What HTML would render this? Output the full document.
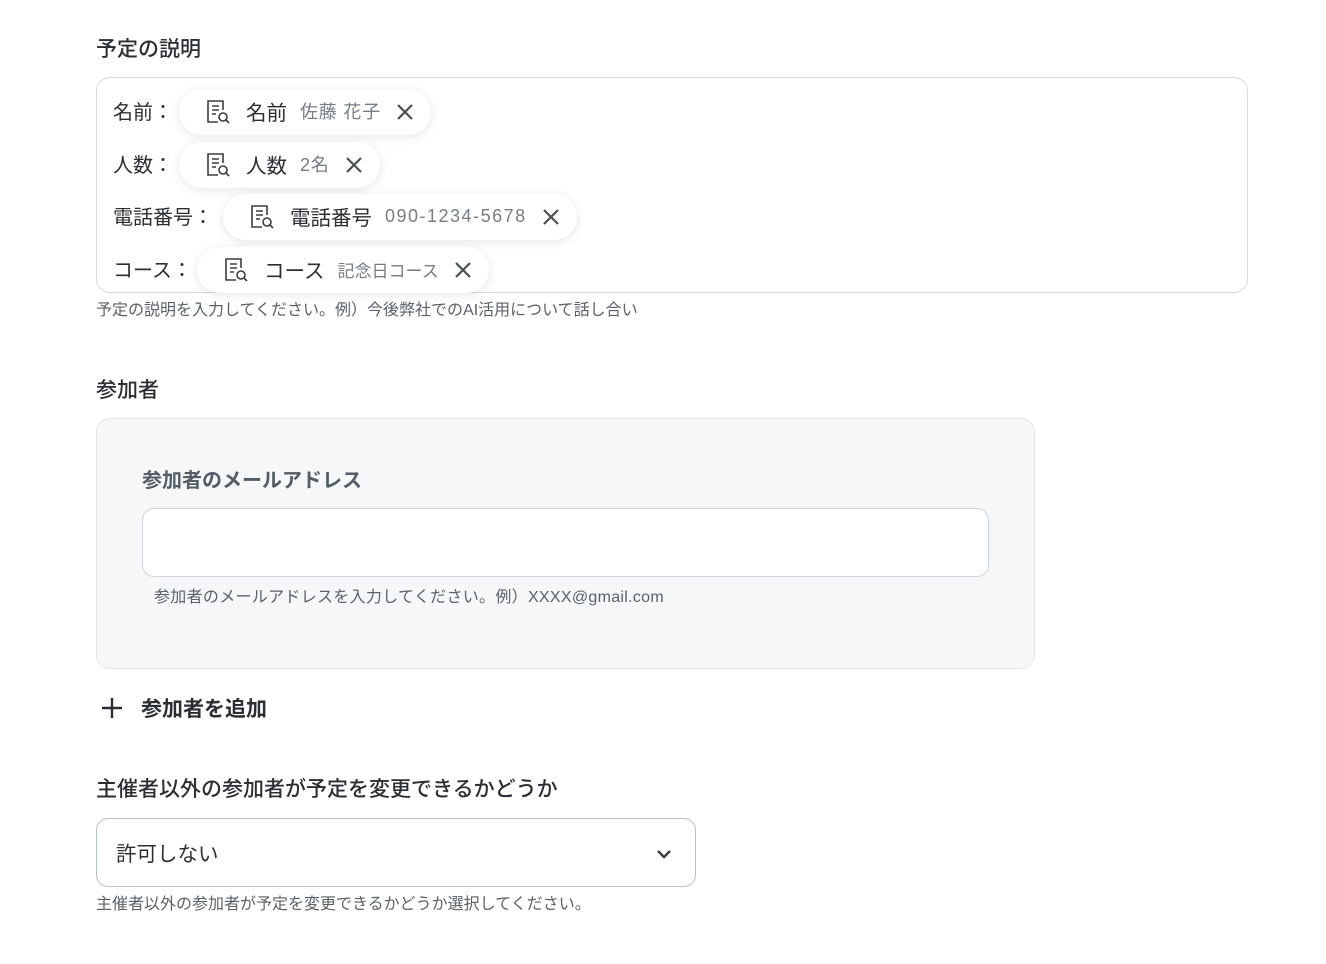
<!DOCTYPE html>
<html><head><meta charset="utf-8"><style>
*{margin:0;padding:0;box-sizing:border-box}
body{width:1326px;height:964px;background:#fff;position:relative;overflow:hidden;font-family:"Liberation Sans","Noto Sans CJK JP",sans-serif;color:#2b2f33}
.a{position:absolute;white-space:nowrap}
.t{font-size:21px;font-weight:500;color:#2b2f33}
.h{font-size:16px;color:#5b6168}
.box{position:absolute;left:96px;top:77px;width:1152px;height:216px;border:1px solid #d6dade;border-radius:14px;overflow:hidden}
.lbl{position:absolute;left:16px;font-size:20px;color:#2b2f33}
.chip{position:absolute;height:46px;border-radius:23px;background:#fff;box-shadow:0 2px 10px rgba(0,0,0,0.10);display:flex;align-items:center;padding-left:26px;padding-right:16px;white-space:nowrap}
.chip svg.ic{margin-right:15px}
.chip .n{font-size:20.5px;color:#2b2f33;margin-right:13px;position:relative;top:-1px}
.chip .v{font-size:18px;color:#777d84;margin-right:14px;letter-spacing:0.8px;position:relative;top:-1px}
</style></head><body>
<div class="a t" style="left:96px;top:33px">予定の説明</div>
<div class="box">
 <div class="lbl" style="top:18px">名前：</div>
 <div class="lbl" style="top:71px">人数：</div>
 <div class="lbl" style="top:123px">電話番号：</div>
 <div class="lbl" style="top:176px">コース：</div>
</div>
<div class="chip" style="left:179px;top:89px">
 <svg class="ic" width="26" height="26" viewBox="0 0 26 26" fill="none" stroke="#3a3e43" stroke-width="1.6"><path d="M13 23H3V2h15v9"/><path d="M7 7h7M7 11h7M7 15h4"/><circle cx="18" cy="18" r="4"/><path d="M21 21l3 3"/></svg>
 <span class="n">名前</span><span class="v">佐藤 花子</span>
 <svg width="20" height="20" viewBox="0 0 20 20" stroke="#4a4f55" stroke-width="2.2"><path d="M3 3l14 14M17 3L3 17"/></svg>
</div>
<div class="chip" style="left:179px;top:142px">
 <svg class="ic" width="26" height="26" viewBox="0 0 26 26" fill="none" stroke="#3a3e43" stroke-width="1.6"><path d="M13 23H3V2h15v9"/><path d="M7 7h7M7 11h7M7 15h4"/><circle cx="18" cy="18" r="4"/><path d="M21 21l3 3"/></svg>
 <span class="n">人数</span><span class="v">2名</span>
 <svg width="20" height="20" viewBox="0 0 20 20" stroke="#4a4f55" stroke-width="2.2"><path d="M3 3l14 14M17 3L3 17"/></svg>
</div>
<div class="chip" style="left:223px;top:194px">
 <svg class="ic" width="26" height="26" viewBox="0 0 26 26" fill="none" stroke="#3a3e43" stroke-width="1.6"><path d="M13 23H3V2h15v9"/><path d="M7 7h7M7 11h7M7 15h4"/><circle cx="18" cy="18" r="4"/><path d="M21 21l3 3"/></svg>
 <span class="n">電話番号</span><span class="v" style="letter-spacing:1.5px">090-1234-5678</span>
 <svg width="20" height="20" viewBox="0 0 20 20" stroke="#4a4f55" stroke-width="2.2"><path d="M3 3l14 14M17 3L3 17"/></svg>
</div>
<div class="chip" style="left:197px;top:247px">
 <svg class="ic" width="26" height="26" viewBox="0 0 26 26" fill="none" stroke="#3a3e43" stroke-width="1.6"><path d="M13 23H3V2h15v9"/><path d="M7 7h7M7 11h7M7 15h4"/><circle cx="18" cy="18" r="4"/><path d="M21 21l3 3"/></svg>
 <span class="n">コース</span><span class="v" style="font-size:17px;letter-spacing:0">記念日コース</span>
 <svg width="20" height="20" viewBox="0 0 20 20" stroke="#4a4f55" stroke-width="2.2"><path d="M3 3l14 14M17 3L3 17"/></svg>
</div>
<div class="a h" style="left:96px;top:296px">予定の説明を入力してください。例）今後弊社でのAI活用について話し合い</div>

<div class="a t" style="left:96px;top:374px">参加者</div>
<div class="a" style="left:96px;top:418px;width:939px;height:251px;background:#f6f7f9;border:1px solid #e2e5e9;border-radius:14px"></div>
<div class="a" style="left:142px;top:464px;font-size:20px;font-weight:bold;color:#545c66">参加者のメールアドレス</div>
<div class="a" style="left:142px;top:508px;width:847px;height:69px;background:#fff;border:1px solid #cfd4da;border-radius:12px"></div>
<div class="a" style="left:154px;top:583px;font-size:16px;color:#5b6168;letter-spacing:0.3px">参加者のメールアドレスを入力してください。例）XXXX@gmail.com</div>

<svg class="a" style="left:101px;top:697px" width="22" height="22" viewBox="0 0 22 22" stroke="#2b2f33" stroke-width="2.4"><path d="M11 1v20M1 11h20"/></svg>
<div class="a" style="left:141px;top:693px;font-size:21px;font-weight:bold;color:#2b2f33">参加者を追加</div>

<div class="a t" style="left:96px;top:773px">主催者以外の参加者が予定を変更できるかどうか</div>
<div class="a" style="left:96px;top:818px;width:600px;height:69px;background:#fff;border:1px solid #b9bfc6;border-radius:12px"></div>
<div class="a" style="left:116px;top:837px;font-size:20.5px;color:#2b2f33">許可しない</div>
<svg class="a" style="left:655px;top:848px" width="18" height="12" viewBox="0 0 18 12" fill="none" stroke="#3a3e43" stroke-width="2.4"><path d="M3 3l6 6 6-6"/></svg>
<div class="a h" style="left:96px;top:890px">主催者以外の参加者が予定を変更できるかどうか選択してください。</div>
</body></html>
